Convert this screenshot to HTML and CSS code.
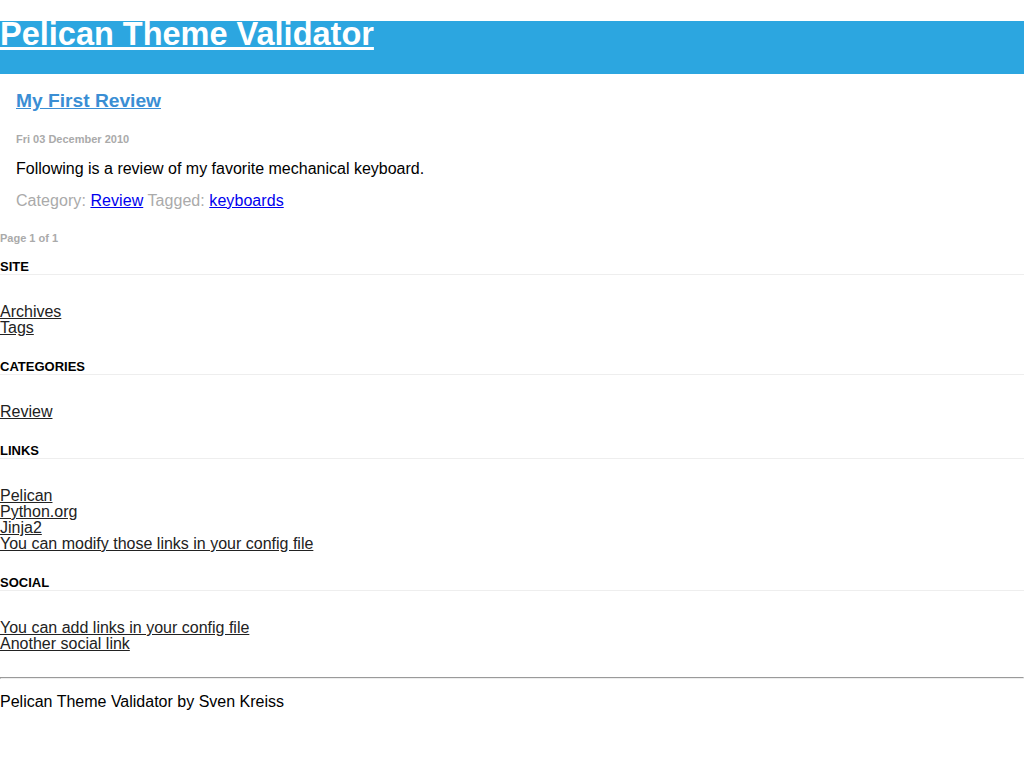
FILE: index.html
```html
<!DOCTYPE html>
<html>
<head>
<meta charset="utf-8">
<title>Pelican Theme Validator</title>
<link rel="stylesheet" href="styles.css">
</head>
<body>
<header class="banner">
  <h1 class="site-title"><a href="#">Pelican Theme Validator</a></h1>
</header>
<main class="content">
  <article class="entry">
    <h2 class="entry-title"><a href="#">My First Review</a></h2>
    <p class="entry-date">Fri 03 December 2010</p>
    <p class="entry-summary">Following is a review of my favorite mechanical keyboard.</p>
    <p class="entry-meta">Category: <a href="#">Review</a> Tagged: <a href="#">keyboards</a></p>
  </article>
  <p class="paginator">Page 1 of 1</p>
</main>
<aside class="sidebar">
  <section class="widget">
    <h3 class="widget-title">SITE</h3>
    <ul class="widget-list">
      <li><a href="#">Archives</a></li>
      <li><a href="#">Tags</a></li>
    </ul>
  </section>
  <section class="widget">
    <h3 class="widget-title">CATEGORIES</h3>
    <ul class="widget-list">
      <li><a href="#">Review</a></li>
    </ul>
  </section>
  <section class="widget">
    <h3 class="widget-title">LINKS</h3>
    <ul class="widget-list">
      <li><a href="#">Pelican</a></li>
      <li><a href="#">Python.org</a></li>
      <li><a href="#">Jinja2</a></li>
      <li><a href="#">You can modify those links in your config file</a></li>
    </ul>
  </section>
  <section class="widget">
    <h3 class="widget-title">SOCIAL</h3>
    <ul class="widget-list">
      <li><a href="#">You can add links in your config file</a></li>
      <li><a href="#">Another social link</a></li>
    </ul>
  </section>
</aside>
<footer class="footer">
  <hr class="footer-rule">
  <p class="footer-text">Pelican Theme Validator by Sven Kreiss</p>
</footer>
</body>
</html>
```

FILE: styles.css
```css
html, body {
  margin: 0;
  padding: 0;
  background: #ffffff;
}

body {
  font-family: "Liberation Sans", Arial, sans-serif;
  color: #000000;
  font-size: 16px;
}

.banner {
  margin-top: 21px;
  background: #2ca6e0;
  padding-bottom: 27px;
}

.site-title {
  margin: 0;
  font-size: 32.5px;
  line-height: 26px;
  font-weight: bold;
}

.site-title a {
  color: #ffffff;
  text-decoration: underline;
}

.content {
  display: flex;
  flex-direction: column;
}

.entry {
  padding: 16px 16px 0 16px;
}

.entry-title {
  margin: 0;
  font-size: 19.2px;
  line-height: 22px;
  font-weight: bold;
}

.entry-title a {
  color: #3a8ed4;
}

.entry-date {
  margin: 21px 0 0 0;
  font-size: 11px;
  line-height: 13px;
  font-weight: bold;
  color: #aaaaaa;
}

.entry-summary {
  margin: 14px 0 0 0;
  font-size: 16px;
  line-height: 18px;
}

.entry-meta {
  margin: 14px 0 0 0;
  font-size: 16px;
  line-height: 18px;
  color: #aaaaaa;
  letter-spacing: 0.06px;
}

.entry-meta a {
  color: #0000ee;
}

.paginator {
  margin: 22px 0 0 0;
  font-size: 11px;
  line-height: 13px;
  font-weight: bold;
  color: #aaaaaa;
}

.sidebar {
  display: flex;
  flex-direction: column;
  padding-top: 14px;
}

.widget-title {
  margin: 0;
  font-size: 13px;
  line-height: 15px;
  font-weight: bold;
  border-bottom: 1px solid #eeeeee;
}

.widget-list {
  list-style: none;
  margin: 29px 0 23px 0;
  padding: 0;
  font-size: 16px;
  line-height: 16px;
}

.widget-list a {
  color: #222222;
}

.footer {
  margin-top: 2px;
}

.footer-rule {
  margin: 0;
}

.footer-text {
  margin: 14px 0 0 0;
  font-size: 16px;
  line-height: 18px;
}
```
